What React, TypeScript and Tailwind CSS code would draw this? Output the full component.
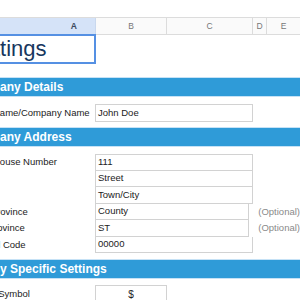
const rowLabel = "w-[95px] shrink-0 overflow-hidden whitespace-nowrap"

function Band({ title, shift }: { title: string; shift: string }) {
  return (
    <div className="flex h-[20px] shrink-0 items-center overflow-hidden whitespace-nowrap border-y border-[#c6e2f6] bg-[#2f9bd8] text-[12px] font-bold text-white">
      <span className={shift}>{title}</span>
    </div>
  )
}

export default function App() {
  const address = [
    { label: 'House Number', shift: '-ml-[7px]', value: '111', tall: true },
    { label: '', shift: '', value: 'Street', tall: false },
    { label: '', shift: '', value: 'Town/City', tall: true },
    { label: 'County/Province', shift: '-ml-[42px]', value: 'County', tall: false, note: true },
    { label: 'State/Province', shift: '-ml-[37px]', value: 'ST', tall: true, note: true },
    { label: 'Zip/Postal Code', shift: '-ml-[42px]', value: '00000', tall: false },
  ]

  return (
    <div className="flex h-[300px] w-[300px] flex-col overflow-hidden bg-white font-['Liberation_Sans',Arial,sans-serif] text-[9.5px] text-[#222]">
      <div className="h-[17px] shrink-0" />

      {/* column headers */}
      <div className="flex h-[18px] shrink-0 border-y border-[#dcdcdc] bg-[#fafafa] text-[8.5px] text-[#777]">
        <div className="flex w-[96px] items-center justify-end border-r border-[#c9d8ee] bg-[#d5e3f8] pr-[18px] font-bold text-[#3c4a5c]">A</div>
        <div className="flex w-[71px] items-center justify-center border-r border-[#dcdcdc]">B</div>
        <div className="flex w-[86px] items-center justify-center border-r border-[#dcdcdc]">C</div>
        <div className="flex w-[14px] items-center justify-center border-r border-[#dcdcdc]">D</div>
        <div className="flex flex-1 items-center justify-center">E</div>
      </div>

      {/* title cell */}
      <div className="-mt-px flex h-[30px] shrink-0">
        <div className="-ml-[40px] flex w-[136px] items-center overflow-hidden whitespace-nowrap border-2 border-[#5590e3] pl-[5px] text-[22px] leading-none text-[#17375e]">
          Settings
        </div>
      </div>

      <div className="h-[13px] shrink-0" />
      <Band title="Company Details" shift="-ml-[34px]" />

      <div className="h-[7px] shrink-0" />
      <div className="flex h-[18px] shrink-0 items-center">
        <div className={rowLabel}>
          <span className="-ml-[7px]">Name/Company Name</span>
        </div>
        <div className="flex h-full w-[158px] items-center border border-[#d2d2d2] pl-[2px]">John Doe</div>
      </div>

      <div className="h-[5px] shrink-0" />
      <Band title="Company Address" shift="-ml-[34px]" />

      <div className="h-[7px] shrink-0" />
      {address.map((r, i) => (
        <div key={i} className={`flex shrink-0 items-center ${r.tall ? 'h-[17px]' : 'h-[16px]'}`}>
          <div className={rowLabel}>
            <span className={r.shift}>{r.label}</span>
          </div>
          <div
            className={`flex h-full w-[158px] items-center border-x border-b border-[#d2d2d2] pl-[2px] ${i === 0 ? 'border-t' : ''}`}
          >
            {r.value}
          </div>
          {r.note && <div className="ml-[9px] whitespace-nowrap text-[#8a8a8a]">(Optional)</div>}
        </div>
      ))}

      <div className="h-[6px] shrink-0" />
      <Band title="Currency Specific Settings" shift="-ml-[46px]" />

      <div className="h-[6px] shrink-0" />
      <div className="flex h-[18px] shrink-0 items-center">
        <div className={rowLabel}>
          <span className="-ml-[43px]">Currency Symbol</span>
        </div>
        <div className="flex h-full w-[72px] items-center justify-center border border-[#d2d2d2] text-[10px]">$</div>
      </div>
    </div>
  )
}
